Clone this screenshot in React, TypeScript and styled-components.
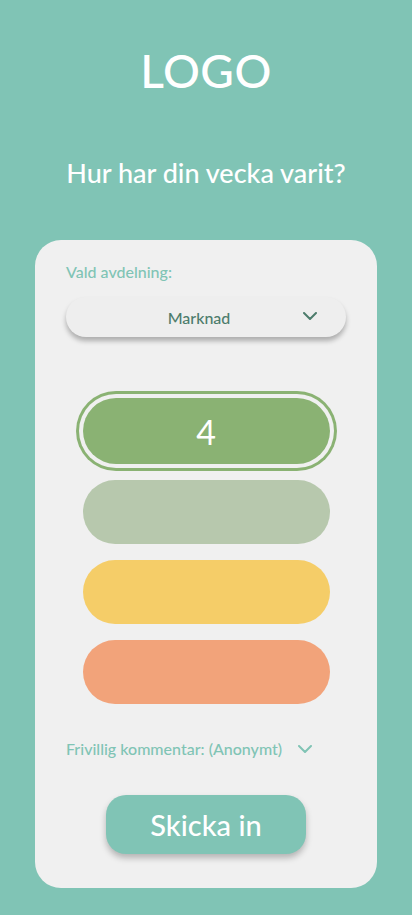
import React from "react";
import styled, { createGlobalStyle } from "styled-components";

const Global = createGlobalStyle`
  html, body { margin: 0; padding: 0; }
  body { background: #80c4b5; font-family: Lato, "Noto Sans", sans-serif; }
`;

const Page = styled.div`
  width: 412px;
  min-height: 915px;
  background: #80c4b5;
  display: flex;
  flex-direction: column;
  align-items: center;
  box-sizing: border-box;
  padding-top: 44px;
`;

const Logo = styled.h1`
  margin: 0;
  color: #fff;
  font-size: 46px;
  font-weight: 500;
  line-height: 54px;
  letter-spacing: 0.5px;
`;

const Question = styled.h2`
  margin: 58px 0 0;
  color: #fff;
  font-size: 27px;
  font-weight: 500;
  line-height: 34px;
`;

const Card = styled.div`
  margin-top: 50px;
  width: 342px;
  height: 648px;
  background: #f0f0f0;
  border-radius: 26px;
  box-sizing: border-box;
  padding: 22px 31px 0;
  display: flex;
  flex-direction: column;
`;

const Label = styled.div`
  color: #80c4b5;
  font-size: 16px;
  font-weight: 500;
  line-height: 20px;
`;

const Select = styled.div`
  margin-top: 15px;
  height: 40px;
  border-radius: 20px;
  background: #eeeeee;
  box-shadow: 0 4px 5px rgba(0, 0, 0, 0.28);
  display: flex;
  align-items: center;
  justify-content: center;
  box-sizing: border-box;
  padding-right: 14px;
  position: relative;
  color: #4d7c6c;
  font-size: 16px;
  font-weight: 500;
`;

const SelectChevron = styled.svg`
  position: absolute;
  right: 29px;
  top: 15px;
`;

const Ratings = styled.div`
  margin-top: 61px;
  display: flex;
  flex-direction: column;
  align-items: center;
  gap: 16px;
`;

const Pill = styled.button<{ $color: string; $selected?: boolean }>`
  width: 247px;
  height: 64px;
  flex-shrink: 0;
  border: none;
  border-radius: 33px;
  background: ${(p) => p.$color};
  color: #fff;
  font-family: Lato, sans-serif;
  font-size: 34px;
  display: flex;
  align-items: center;
  justify-content: center;
  padding: 0;
  ${(p) =>
    p.$selected
      ? `box-shadow: 0 0 0 4px #f0f0f0, 0 0 0 7px ${p.$color}; height: 66px;`
      : ""}
`;

const Comment = styled.div`
  margin-top: 35px;
  display: flex;
  align-items: center;
  gap: 16px;
  color: #80c4b5;
  font-size: 16px;
  font-weight: 500;
  line-height: 20px;
`;

const Submit = styled.button`
  align-self: center;
  margin-top: 36px;
  width: 200px;
  height: 59px;
  border: none;
  border-radius: 20px;
  background: #80c4b5;
  color: #fff;
  font-family: Lato, sans-serif;
  font-size: 29px;
  font-weight: 500;
  box-shadow: 0 4px 6px rgba(0, 0, 0, 0.25);
`;

const Chevron = ({ color }: { color: string }) => (
  <svg width="14" height="8" viewBox="0 0 14 8" fill="none">
    <path d="M1 1l6 6 6-6" stroke={color} strokeWidth="2" strokeLinecap="round" strokeLinejoin="round" />
  </svg>
);

export default function App() {
  return (
    <>
      <Global />
      <Page>
        <Logo>LOGO</Logo>
        <Question>Hur har din vecka varit?</Question>
        <Card>
          <Label>Vald avdelning:</Label>
          <Select>
            Marknad
            <SelectChevron width="14" height="8" viewBox="0 0 14 8" fill="none">
              <path d="M1 1l6 6 6-6" stroke="#4d7c6c" strokeWidth="2" strokeLinecap="round" strokeLinejoin="round" />
            </SelectChevron>
          </Select>
          <Ratings>
            <Pill $color="#8ab273" $selected>4</Pill>
            <Pill $color="#b7c8ad" />
            <Pill $color="#f5cd68" />
            <Pill $color="#f2a37a" />
          </Ratings>
          <Comment>
            Frivillig kommentar: (Anonymt)
            <Chevron color="#80c4b5" />
          </Comment>
          <Submit>Skicka in</Submit>
        </Card>
      </Page>
    </>
  );
}
